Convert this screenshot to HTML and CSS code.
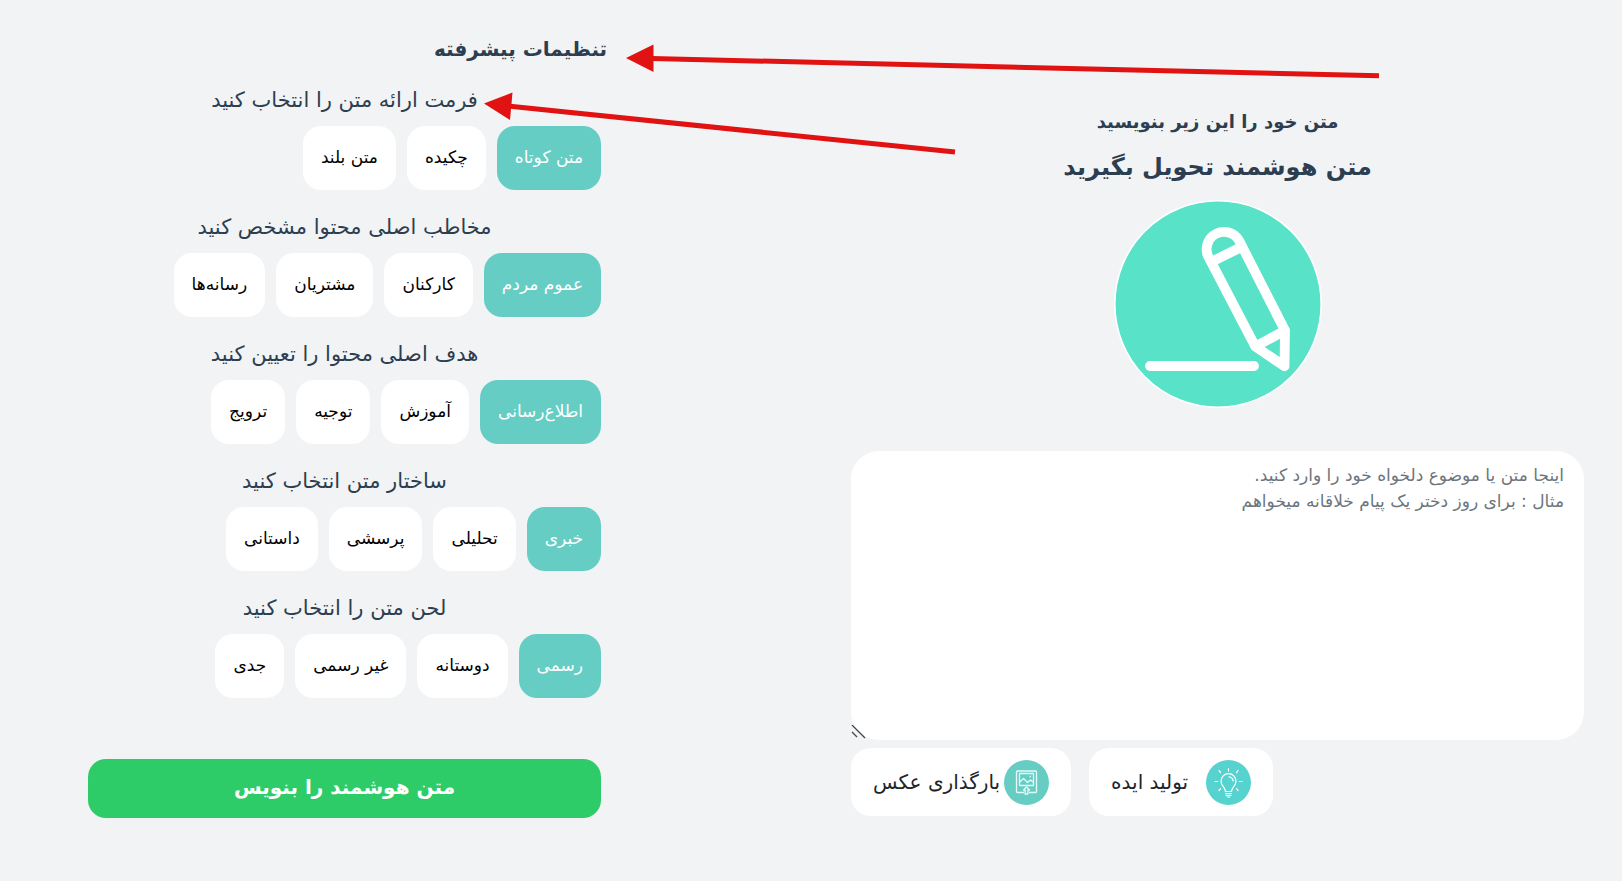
FILE: index.html
```html
<!DOCTYPE html>
<html lang="fa" dir="rtl">
<head>
<meta charset="utf-8">
<meta name="viewport" content="width=device-width, initial-scale=1">
<title>متن هوشمند</title>
<link rel="stylesheet" href="styles.css">
</head>
<body>
<main class="page">
  <section class="composer">
    <h2 class="composer-lead"><label for="topic">متن خود را این زیر بنویسید</label></h2>
    <h1 class="composer-title">متن هوشمند تحویل بگیرید</h1>
    <svg class="hero" viewBox="0 0 208 208" aria-hidden="true">
      <circle cx="104" cy="104" r="103.2" fill="#58e2c8" stroke="#fff" stroke-width="1.6"/>
      <g fill="none" stroke="#fff" stroke-width="9.8" stroke-linejoin="round" stroke-linecap="round">
        <path d="M36 166H140"/>
        <path d="M171 130.500L124.900 40.200A17.400 17.400 0 0 0 94 56L141.300 146.500L170.500 166.300Z"/>
        <path d="M97 62L127.500 47M141.300 146.500L171 130.500" stroke-linecap="butt"/>
      </g>
    </svg>
    <textarea class="topic" id="topic" placeholder="اینجا متن یا موضوع دلخواه خود را وارد کنید.&#10;مثال : برای روز دختر یک پیام خلاقانه میخواهم"></textarea>
    <div class="tools">
      <button class="tool tool-idea" type="button">
        <svg class="tool-icon" viewBox="0 0 45 45" aria-hidden="true">
          <circle cx="22.500" cy="22.500" r="22.500" fill="#57d3cf"/>
          <g fill="none" stroke="#fff" stroke-width="1.200" stroke-linecap="round">
            <path d="M19.500 31.500C19.500 27 15 26 15 21.200a7.500 7.500 0 0 1 15 0C30 26 25.500 27 25.500 31.500Z"/>
            <path d="M23 16.800c2.300.3 3.800 1.800 4.200 4M19.500 33.500h6M20 35.300h5M21.300 37h2.400"/>
            <path d="M22.500 8.500v2.400M13 10.500l1.500 2.200M32 10.500l-1.500 2.200M9 21.500h2.600M33.400 21.500H36M13 30.500l1.500-1.800M32 30.500l-1.500-1.800"/>
          </g>
        </svg>
        <span>تولید ایده</span>
      </button>
      <button class="tool tool-upload" type="button">
        <svg class="tool-icon" viewBox="0 0 45 45" aria-hidden="true">
          <circle cx="22.500" cy="22.500" r="22.500" fill="#66cdc4"/>
          <g fill="none" stroke="#e6faf7" stroke-width="1.300" stroke-linejoin="round">
            <path d="M20 32.500h-6.500a1 1 0 0 1-1-1V12a1 1 0 0 1 1-1h18a1 1 0 0 1 1 1v19.500a1 1 0 0 1-1 1H25"/>
            <path d="M15.500 13.500h14v12h-14zM15.500 22.500l4-4 4 4 3-2.600 3 2.600M25.500 16.500h1.500"/>
            <path d="M22.500 27l-3 3h1.600v4h2.800v-4h1.600z"/>
          </g>
        </svg>
        <span>بارگذاری عکس</span>
      </button>
    </div>
  </section>

  <section class="settings">
    <h2 class="settings-title">تنظیمات پیشرفته</h2>
    <div class="group" role="group" aria-labelledby="g-format">
      <h3 class="group-title" id="g-format">فرمت ارائه متن را انتخاب کنید</h3>
      <div class="chips">
        <button class="chip chip-on" type="button" aria-pressed="true">متن کوتاه</button>
        <button class="chip" type="button">چکیده</button>
        <button class="chip" type="button">متن بلند</button>
      </div>
    </div>
    <div class="group" role="group" aria-labelledby="g-audience">
      <h3 class="group-title" id="g-audience">مخاطب اصلی محتوا مشخص کنید</h3>
      <div class="chips">
        <button class="chip chip-on" type="button" aria-pressed="true">عموم مردم</button>
        <button class="chip" type="button">کارکنان</button>
        <button class="chip" type="button">مشتریان</button>
        <button class="chip" type="button">رسانه‌ها</button>
      </div>
    </div>
    <div class="group" role="group" aria-labelledby="g-goal">
      <h3 class="group-title" id="g-goal">هدف اصلی محتوا را تعیین کنید</h3>
      <div class="chips">
        <button class="chip chip-on" type="button" aria-pressed="true">اطلاع‌رسانی</button>
        <button class="chip" type="button">آموزش</button>
        <button class="chip" type="button">توجیه</button>
        <button class="chip" type="button">ترویج</button>
      </div>
    </div>
    <div class="group" role="group" aria-labelledby="g-structure">
      <h3 class="group-title" id="g-structure">ساختار متن انتخاب کنید</h3>
      <div class="chips">
        <button class="chip chip-on" type="button" aria-pressed="true">خبری</button>
        <button class="chip" type="button">تحلیلی</button>
        <button class="chip" type="button">پرسشی</button>
        <button class="chip" type="button">داستانی</button>
      </div>
    </div>
    <div class="group" role="group" aria-labelledby="g-tone">
      <h3 class="group-title" id="g-tone">لحن متن را انتخاب کنید</h3>
      <div class="chips">
        <button class="chip chip-on" type="button" aria-pressed="true">رسمی</button>
        <button class="chip" type="button">دوستانه</button>
        <button class="chip" type="button">غیر رسمی</button>
        <button class="chip" type="button">جدی</button>
      </div>
    </div>
    <button class="submit" type="button">متن هوشمند را بنویس</button>
  </section>
</main>
<svg class="arrows" viewBox="0 0 1622 881" aria-hidden="true">
  <g fill="#e11212" stroke="none">
    <path d="M626 58L653.500 44.500V72Z"/>
    <path d="M484 103.500L512.500 92.500L510 120Z"/>
  </g>
  <path d="M652 58.500L1379 75.800M510 106.300L955 152" fill="none" stroke="#e11212" stroke-width="5"/>
</svg>
</body>
</html>
```
FILE: styles.css
```css
* {
  box-sizing: border-box;
}

body {
  position: relative;
  margin: 0;
  background: #f1f3f5;
  color: #2c3e50;
  font-family: "DejaVu Sans", sans-serif;
}

button,
textarea {
  border: 0;
  font-family: inherit;
}

h1,
h2,
h3 {
  margin: 0;
}

.page {
  display: grid;
  grid-template-columns: 10fr 7fr;
  column-gap: 250px;
  align-items: start;
  min-height: 100vh;
  padding: 0 38px 0 88px;
}

.composer {
  display: flex;
  flex-direction: column;
  align-items: center;
  padding-top: 104px;
}

.composer-lead {
  font-size: 18px;
  line-height: 36px;
}

.composer-title {
  font-size: 24px;
  line-height: 54px;
}

.hero {
  width: 208px;
  height: 208px;
  margin: 6px 0 43px;
}

.topic {
  display: block;
  width: 100%;
  height: 289px;
  padding: 11px 20px;
  border-radius: 28px;
  background: #fff;
  color: #212529;
  font-size: 17px;
  line-height: 26px;
  resize: both;
}

.topic::placeholder {
  color: #6c757d;
  opacity: 1;
}

.topic::-webkit-resizer {
  background: url("data:image/svg+xml,%3Csvg xmlns='http://www.w3.org/2000/svg' width='15' height='15'%3E%3Cpath d='M1 0L14 13M1 7L6 12' stroke='%23444' stroke-width='1.300'/%3E%3C/svg%3E") left bottom no-repeat;
}

.tools {
  display: flex;
  justify-content: flex-end;
  gap: 18px;
  width: 100%;
  margin-top: 8px;
}

.tool {
  display: flex;
  align-items: center;
  height: 68px;
  padding: 0 22px;
  border-radius: 20px;
  background: #fff;
  color: #212529;
  font-size: 20px;
}

.tool-idea {
  gap: 18px;
}

.tool-upload {
  gap: 4px;
}

.tool-icon {
  flex: none;
  width: 45px;
  height: 45px;
}

.settings {
  padding-top: 24px;
}

.settings-title {
  margin-right: -6px;
  font-size: 20px;
  line-height: 50px;
}

.group {
  height: 127px;
  padding-top: 8px;
}

.group-title {
  margin-bottom: 8px;
  font-size: 21px;
  font-weight: 400;
  line-height: 36px;
  text-align: center;
}

.chips {
  display: flex;
  gap: 11px;
}

.chip {
  height: 64px;
  padding: 0 18px 2px;
  border-radius: 18px;
  background: #fff;
  color: #000;
  font-size: 17px;
  white-space: nowrap;
}

.chip-on {
  background: #65cdc4;
  color: #fff;
}

.submit {
  width: 100%;
  height: 59px;
  margin-top: 50px;
  padding-bottom: 4px;
  border-radius: 18px;
  background: #2ecc68;
  color: #fff;
  font-size: 20px;
  font-weight: 700;
}

.arrows {
  position: absolute;
  top: 0;
  left: 0;
  width: 100%;
  pointer-events: none;
}
```
